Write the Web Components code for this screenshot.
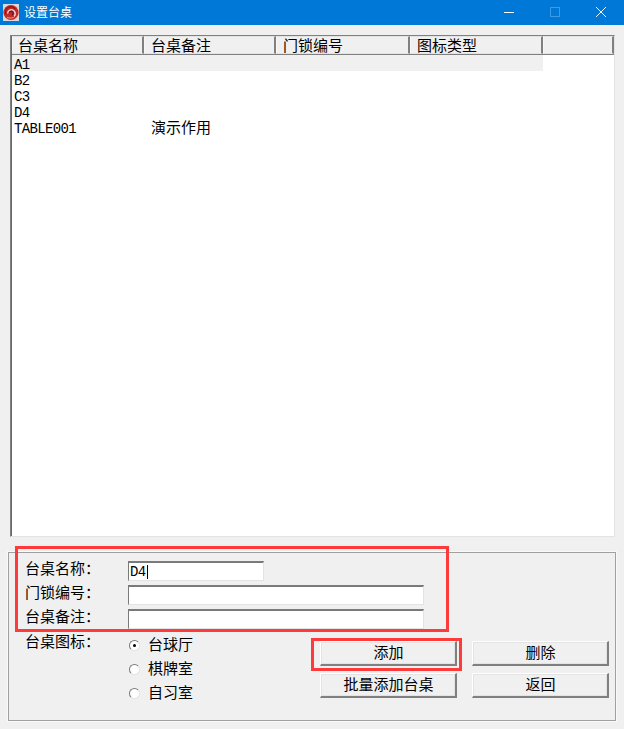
<!DOCTYPE html>
<html lang="zh-CN">
<head>
<meta charset="utf-8">
<title>设置台桌</title>
<style>
	html, body { margin: 0; height: 100%; }
	body {
		position:   relative;
		width:      624px;
		height:     729px;
		overflow:   hidden;
		background: #f0f0f0;
		color:      #000;
		font:       15px/16px "Noto Sans CJK SC", "Liberation Sans", sans-serif;
	}
</style>
</head>
<body>

<win-titlebar>设置台桌</win-titlebar>

<win-list>
	<win-column slot="head" style="width:132px;padding-left:5px">台桌名称</win-column>
	<win-column slot="head" style="width:132px">台桌备注</win-column>
	<win-column slot="head" style="width:134px">门锁编号</win-column>
	<win-column slot="head" style="width:133px">图标类型</win-column>
	<win-column slot="head" style="flex:1"></win-column>

	<win-row selected><win-latin>A1</win-latin></win-row>
	<win-row><win-latin>B2</win-latin></win-row>
	<win-row><win-latin>C3</win-latin></win-row>
	<win-row><win-latin>D4</win-latin></win-row>
	<win-row><win-latin>TABLE001</win-latin><span slot="note">演示作用</span></win-row>
</win-list>

<win-group>
	<win-field label="台桌名称：" width="136"><win-latin>D4</win-latin><win-caret></win-caret></win-field>
	<win-field label="门锁编号：" width="296"></win-field>
	<win-field label="台桌备注：" width="296"></win-field>

	<win-options label="台桌图标：">
		<win-radio checked>台球厅</win-radio>
		<win-radio>棋牌室</win-radio>
		<win-radio>自习室</win-radio>

		<win-button slot="actions">添加</win-button>
		<win-button slot="actions">删除</win-button>
		<win-button slot="actions">批量添加台桌</win-button>
		<win-button slot="actions">返回</win-button>
	</win-options>
</win-group>

<win-mark style="left:15px;top:546px;width:434px;height:86px"></win-mark>
<win-mark style="left:311px;top:638px;width:151px;height:33px"></win-mark>

<script>
(function ()
{
	function define( name, markup, setup )
	{
		customElements.define( name, class extends HTMLElement
		{
			constructor()
			{
				super();

				let shadow = this.attachShadow({ mode: 'open' });

				shadow.innerHTML = markup;

				if ( setup ) setup( this, shadow );
			}
		});
	}

	define( 'win-titlebar',
	`
	<style>
		:host {
			display:     flex;
			align-items: center;
			height:      25px;
			background:  #0078d7;
			color:       #fff;
			font-size:   12px;
		}
		.icon  { margin: 0 5px 0 3px; flex: none; }
		.title { flex: 1; padding-bottom: 2px; }
		.ctl   { width: 46px; height: 25px; display: block; flex: none; }
	</style>
	<svg class="icon" width="16" height="17" viewBox="0 0 16 17">
		<rect width="16" height="17" fill="#dcd8d8"/>
		<circle cx="8" cy="8.5" r="7.6" fill="#c42a28"/>
		<path d="M2.8 10a5.4 5.4 0 0 1 9.6-4.8" fill="none" stroke="#8e1615" stroke-width="1.2"/>
		<path d="M4.6 9.6a3.8 3.8 0 1 1 6.6 2.6" fill="none" stroke="#f5e3e3" stroke-width="1.4"/>
		<path d="M6.4 9a1.9 1.9 0 1 1 2.4 1.8" fill="none" stroke="#6b1413" stroke-width="1.2"/>
		<path d="M4 13.2c2.4 1.4 6 1.2 8-.8" fill="none" stroke="#e79c9b" stroke-width="1"/>
	</svg>
	<div class="title"><slot></slot></div>
	<svg class="ctl" viewBox="0 0 46 25"><path d="M18 12.5h10" stroke="#fff" fill="none"/></svg>
	<svg class="ctl" viewBox="0 0 46 25"><rect x="18.5" y="7.5" width="9" height="9" stroke="#3f9ae2" fill="none"/></svg>
	<svg class="ctl" viewBox="0 0 46 25"><path d="M18 7l10 10M28 7L18 17" stroke="#fff" fill="none"/></svg>
	` );

	define( 'win-list',
	`
	<style>
		:host {
			display:       flex;
			flex-direction: column;
			box-sizing:    border-box;
			height:        502px;
			margin:        10px 9px 0 10px;
			background:    #fff;
			border-style:  solid;
			border-width:  1px 1px 1px 1px;
			border-color:  #808080 #e3e3e3 #e3e3e3 #808080;
			box-shadow:    inset 1px 0 0 #696969;
		}
		.head {
			display:       flex;
			height:        18px;
			flex:          none;
			margin-left:   1px;
			background:    #f0f0f0;
			border-bottom: 1px solid #808080;
		}
		.rows { flex: 1; padding-left: 1px; }
	</style>
	<div class="head"><slot name="head"></slot></div>
	<div class="rows"><slot></slot></div>
	` );

	define( 'win-column',
	`
	<style>
		:host {
			display:     block;
			box-sizing:  border-box;
			height:      18px;
			padding:     0 0 0 6px;
			line-height: 16px;
			border:      1px solid #e3e3e3;
			border-right: 2px solid #808080;
			border-left-color: #f6f6f6;
			white-space: nowrap;
		}
		:host(:last-child) { border-right: 1px solid #e3e3e3; }
	</style>
	<slot></slot>
	` );

	define( 'win-row',
	`
	<style>
		:host {
			display:  grid;
			grid-template-columns: 132px 399px;
			height:   16px;
			width:    531px;
			line-height: 16px;
		}
		:host([selected]) { background: #f0f0f0; }
		.name { padding-left: 2px; line-height: 15px; }
		.note { padding-left: 7px; }
	</style>
	<div class="name"><slot></slot></div>
	<div class="note"><slot name="note"></slot></div>
	` );

	define( 'win-latin',
	`
	<style>
		:host {
			font-family:    "Liberation Mono", monospace;
			font-size:      14px;
			letter-spacing: -0.65px;
		}
	</style>
	<slot></slot>
	` );

	define( 'win-group',
	`
	<style>
		:host {
			display:    block;
			box-sizing: border-box;
			height:     169px;
			margin:     15px 8px 0 8px;
			padding:    8px 6px 0 16px;
			border:     1px solid #a0a0a0;
			box-shadow: 0 0 0 1px #fafafa;
		}
	</style>
	<slot></slot>
	` );

	define( 'win-field',
	`
	<style>
		:host { display: flex; height: 20px; margin-bottom: 4px; }
		.label { width: 103px; flex: none; line-height: 14px; }
		.box {
			box-sizing:   border-box;
			height:       20px;
			padding:      0 0 0 1px;
			display:      flex;
			align-items:  center;
			background:   #fff;
			border-style: solid;
			border-width: 2px 1px 1px 1px;
			border-color: #7a7a7a #e3e3e3 #e3e3e3 #7a7a7a;
		}
	</style>
	<div class="label"></div>
	<div class="box"><slot></slot></div>
	`,
	( $host, $shadow ) =>
	{
		$shadow.querySelector( '.label' ).textContent = $host.getAttribute( 'label' );
		$shadow.querySelector( '.box' ).style.width = $host.getAttribute( 'width' ) + 'px';
	} );

	define( 'win-caret',
	`
	<style>
		:host { display: block; width: 1px; height: 14px; margin-left: 1px; background: #000; }
	</style>
	` );

	define( 'win-options',
	`
	<style>
		:host { display: flex; }
		.label   { width: 103px; flex: none; line-height: 16px; }
		.radios  { width: 192px; flex: none; }
		.actions {
			display: grid;
			grid-template-columns: 137px 137px;
			grid-auto-rows: 25px;
			column-gap: 15px;
			row-gap: 7px;
			margin-top: 8px;
		}
	</style>
	<div class="label"></div>
	<div class="radios"><slot></slot></div>
	<div class="actions"><slot name="actions"></slot></div>
	`,
	( $host, $shadow ) =>
	{
		$shadow.querySelector( '.label' ).textContent = $host.getAttribute( 'label' );
	} );

	define( 'win-radio',
	`
	<style>
		:host { display: flex; align-items: center; height: 24px; padding-left: 1px; }
		.dot {
			box-sizing:   border-box;
			width:        11px;
			height:       11px;
			margin-right: 8px;
			flex:         none;
			border-radius: 50%;
			background:   #fff;
			border:       1px solid;
			border-color: #7a7a7a #e3e3e3 #e3e3e3 #7a7a7a;
			display:      grid;
			place-items:  center;
		}
		:host([checked]) .dot::after {
			content: "";
			width:   3px;
			height:  3px;
			border-radius: 50%;
			background: #000;
		}
		.text { margin-top: -2px; }
	</style>
	<span class="dot"></span><span class="text"><slot></slot></span>
	` );

	define( 'win-button',
	`
	<style>
		:host {
			display:      flex;
			align-items:  center;
			justify-content: center;
			box-sizing:   border-box;
			padding:      0 0 2px 1px;
			background:   #f0f0f0;
			border-style: solid;
			border-width: 1px 2px 2px 1px;
			border-color: #fff #808080 #808080 #fff;
			box-shadow:   inset 1px 1px 0 #e3e3e3, inset -1px -1px 0 #e3e3e3;
			line-height:  16px;
		}
	</style>
	<slot></slot>
	` );

	define( 'win-mark',
	`
	<style>
		:host {
			position:   absolute;
			box-sizing: border-box;
			border:     3px solid #ff3a3a;
		}
	</style>
	` );
})();
</script>
</body>
</html>
